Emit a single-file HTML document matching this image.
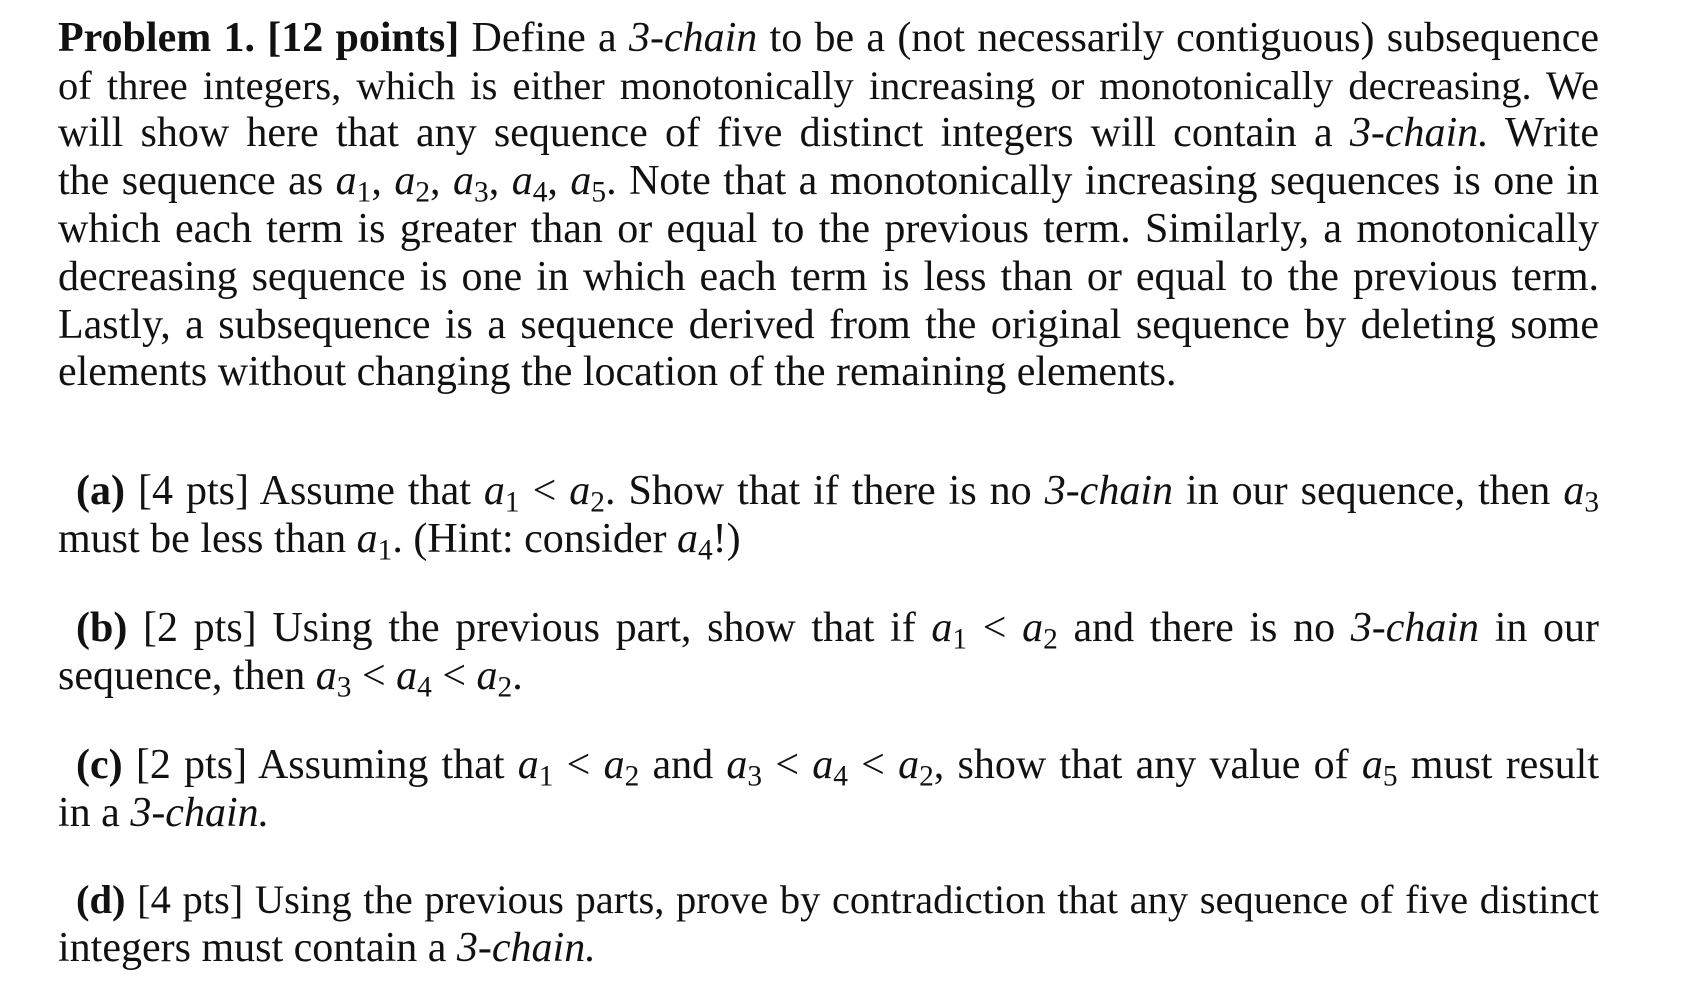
<!DOCTYPE html>
<html><head><meta charset="utf-8"><style>
body{margin:0;background:#fff;width:1687px;height:998px;position:relative;overflow:hidden;font-family:"Liberation Serif",serif;color:#111;}
.l{position:absolute;left:58px;width:1541px;height:48px;line-height:48px;font-size:42px;text-align:justify;text-align-last:justify;white-space:normal;}
.s{font-size:40.5px;}
.e{text-align-last:left;}
i{font-style:italic;}
sub{font-size:0.7em;vertical-align:-0.25em;line-height:0;font-style:normal;}
b{font-weight:bold;}
</style></head><body>
<div class="l" style="top:14px"><b>Problem 1. [12 points]</b> Define a <i>3-chain</i> to be a (not necessarily contiguous) subsequence</div>
<div class="l s" style="top:62px">of three integers, which is either monotonically increasing or monotonically decreasing. We</div>
<div class="l" style="top:109px">will show here that any sequence of five distinct integers will contain a <i>3-chain.</i> Write</div>
<div class="l" style="top:157px">the sequence as <i>a</i><sub>1</sub>, <i>a</i><sub>2</sub>, <i>a</i><sub>3</sub>, <i>a</i><sub>4</sub>, <i>a</i><sub>5</sub>. Note that a monotonically increasing sequences is one in</div>
<div class="l" style="top:205px">which each term is greater than or equal to the previous term. Similarly, a monotonically</div>
<div class="l" style="top:253px">decreasing sequence is one in which each term is less than or equal to the previous term.</div>
<div class="l" style="top:301px">Lastly, a subsequence is a sequence derived from the original sequence by deleting some</div>
<div class="l e" style="top:348px">elements without changing the location of the remaining elements.</div>

<div class="l" style="top:467px;left:76px;width:1523px"><b>(a)</b> [4 pts] Assume that <i>a</i><sub>1</sub> &lt; <i>a</i><sub>2</sub>. Show that if there is no <i>3-chain</i> in our sequence, then <i>a</i><sub>3</sub></div>
<div class="l e" style="top:515px">must be less than <i>a</i><sub>1</sub>. (Hint: consider <i>a</i><sub>4</sub>!)</div>

<div class="l" style="top:604px;left:76px;width:1523px"><b>(b)</b> [2 pts] Using the previous part, show that if <i>a</i><sub>1</sub> &lt; <i>a</i><sub>2</sub> and there is no <i>3-chain</i> in our</div>
<div class="l e" style="top:652px">sequence, then <i>a</i><sub>3</sub> &lt; <i>a</i><sub>4</sub> &lt; <i>a</i><sub>2</sub>.</div>

<div class="l" style="top:741px;left:76px;width:1523px"><b>(c)</b> [2 pts] Assuming that <i>a</i><sub>1</sub> &lt; <i>a</i><sub>2</sub> and <i>a</i><sub>3</sub> &lt; <i>a</i><sub>4</sub> &lt; <i>a</i><sub>2</sub>, show that any value of <i>a</i><sub>5</sub> must result</div>
<div class="l e" style="top:789px">in a <i>3-chain.</i></div>

<div class="l s" style="top:876px;left:76px;width:1523px"><b>(d)</b> [4 pts] Using the previous parts, prove by contradiction that any sequence of five distinct</div>
<div class="l e" style="top:924px">integers must contain a <i>3-chain.</i></div>
</body></html>
